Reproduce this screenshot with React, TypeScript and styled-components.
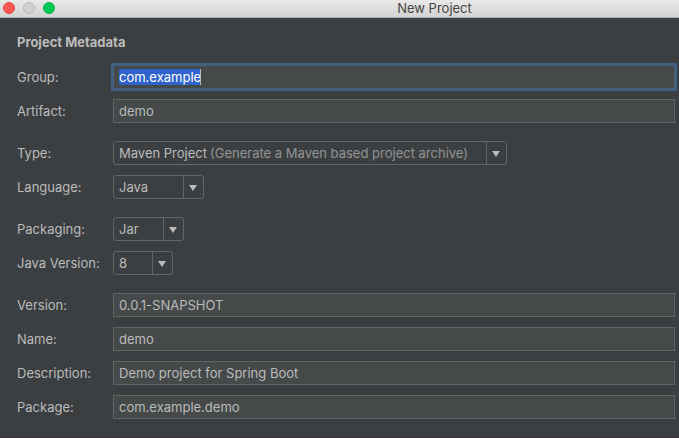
import React, { useEffect, useRef } from "react";
import styled, { createGlobalStyle, css } from "styled-components";

const GlobalStyle = createGlobalStyle`
  *, *::before, *::after { box-sizing: border-box; }
  body {
    margin: 0;
    background: #3c3f41;
    color: #bbbbbb;
    font-family: Inter, "Liberation Sans", sans-serif;
    font-size: 13px;
    line-height: 16px;
  }
`;

const Window = styled.div`
  display: flex;
  flex-direction: column;
  min-height: 100vh;
  background: #3c3f41;
  border-bottom: 1px solid #393438;
`;

const TitleBar = styled.header`
  display: grid;
  grid-template-columns: 190px 1fr;
  align-items: center;
  height: 18px;
  padding-bottom: 3px;
  background: linear-gradient(#e9e9e9, #d3d3d3);
  border-bottom: 1px solid #b0b0b0;
`;

const Lights = styled.div`
  display: flex;
  gap: 8px;
  padding-left: 3px;
`;

const Light = styled.button<{ $fill: string; $rim: string }>`
  width: 12px;
  height: 12px;
  margin: 0;
  padding: 0;
  border: 1px solid ${(p) => p.$rim};
  border-radius: 50%;
  background: ${(p) => p.$fill};
`;

const Title = styled.h1`
  margin: 0;
  color: #454545;
  font-size: 13px;
  font-weight: 400;
  line-height: 16px;
  text-align: center;
`;

const Form = styled.form`
  display: flex;
  flex-direction: column;
  gap: 18px;
  padding: 16px 4px 17px 17px;
`;

const Heading = styled.h2`
  margin: 0 0 -3px;
  font-size: 13px;
  font-weight: 700;
  line-height: 16px;
`;

const Group = styled.div`
  display: flex;
  flex-direction: column;
  gap: 10px;
`;

const Row = styled.div`
  display: grid;
  grid-template-columns: 96px 1fr;
  align-items: center;
  justify-items: start;
`;

const Label = styled.label`
  white-space: nowrap;
`;

const TextBox = styled.input`
  width: 100%;
  height: 24px;
  padding: 0 5px;
  border: 1px solid #646464;
  border-radius: 0;
  outline: none;
  background: #45494a;
  color: #bbbbbb;
  font: inherit;

  &:focus {
    border-color: #4c6074;
    box-shadow: 0 0 0 2px #3c5f86;
  }
  &::selection {
    background: #2f65ca;
    color: #ffffff;
  }
`;

const Combo = styled.div<{ $width: number }>`
  display: grid;
  grid-template-columns: 1fr 21px;
  width: ${(p) => p.$width}px;
  height: 24px;
`;

const Select = styled.select`
  grid-area: 1 / 1 / 2 / 3;
  width: 100%;
  height: 24px;
  padding: 0 5px;
  appearance: none;
  border: 1px solid #646464;
  border-radius: 3px;
  background: #3c3f41;
  color: #bbbbbb;
  font: inherit;
`;

const overlay = css`
  display: flex;
  align-items: center;
  pointer-events: none;
`;

const Hint = styled.span`
  ${overlay}
  grid-area: 1 / 1 / 2 / 2;
  padding-left: 97px;
  color: #939393;
  white-space: nowrap;
`;

const ArrowCell = styled.span`
  ${overlay}
  grid-area: 1 / 2 / 2 / 3;
  justify-content: center;
  border-left: 1px solid #646464;
  padding: 1px 2px 0 0;
`;

const InputShell = styled.div`
  position: relative;
  width: 100%;
  display: flex;
`;

const Caret = styled.span`
  position: absolute;
  top: 4px;
  left: 87px;
  width: 1px;
  height: 16px;
  background: #bbbbbb;
  pointer-events: none;
`;

type TextFieldProps = { id: string; label: string; value: string; selected?: boolean };

function TextField({ id, label, value, selected }: TextFieldProps) {
  const ref = useRef<HTMLInputElement>(null);
  useEffect(() => {
    if (selected) {
      ref.current?.focus();
      ref.current?.select();
    }
  }, [selected]);
  return (
    <Row>
      <Label htmlFor={id}>{label}:</Label>
      <InputShell>
        <TextBox ref={ref} id={id} type="text" defaultValue={value} spellCheck={false} />
        {selected && <Caret />}
      </InputShell>
    </Row>
  );
}

type ComboFieldProps = { id: string; label: string; value: string; width: number; hint?: string };

function ComboField({ id, label, value, width, hint }: ComboFieldProps) {
  return (
    <Row>
      <Label htmlFor={id}>{label}:</Label>
      <Combo $width={width}>
        <Select id={id} defaultValue={value}>
          <option>{value}</option>
        </Select>
        {hint && <Hint>{hint}</Hint>}
        <ArrowCell>
          <svg width="8" height="6" viewBox="0 0 8 6" aria-hidden="true">
            <path d="M0 0H8L4 6Z" fill="#bbbbbb" />
          </svg>
        </ArrowCell>
      </Combo>
    </Row>
  );
}

export default function App() {
  return (
    <Window>
      <GlobalStyle />
      <TitleBar>
        <Lights>
          <Light type="button" aria-label="Close" $fill="#fc5753" $rim="#df4744" />
          <Light type="button" aria-label="Minimize" $fill="#d0d0d0" $rim="#b8b8b8" />
          <Light type="button" aria-label="Zoom" $fill="#00ca56" $rim="#14ae46" />
        </Lights>
        <Title>New Project</Title>
      </TitleBar>
      <Form>
        <Heading>Project Metadata</Heading>
        <Group>
          <TextField id="group" label="Group" value="com.example" selected />
          <TextField id="artifact" label="Artifact" value="demo" />
        </Group>
        <Group>
          <ComboField
            id="type"
            label="Type"
            value="Maven Project"
            hint="(Generate a Maven based project archive)"
            width={394}
          />
          <ComboField id="language" label="Language" value="Java" width={91} />
        </Group>
        <Group>
          <ComboField id="packaging" label="Packaging" value="Jar" width={71} />
          <ComboField id="java-version" label="Java Version" value="8" width={60} />
        </Group>
        <Group>
          <TextField id="version" label="Version" value="0.0.1-SNAPSHOT" />
          <TextField id="name" label="Name" value="demo" />
          <TextField id="description" label="Description" value="Demo project for Spring Boot" />
          <TextField id="package" label="Package" value="com.example.demo" />
        </Group>
      </Form>
    </Window>
  );
}
